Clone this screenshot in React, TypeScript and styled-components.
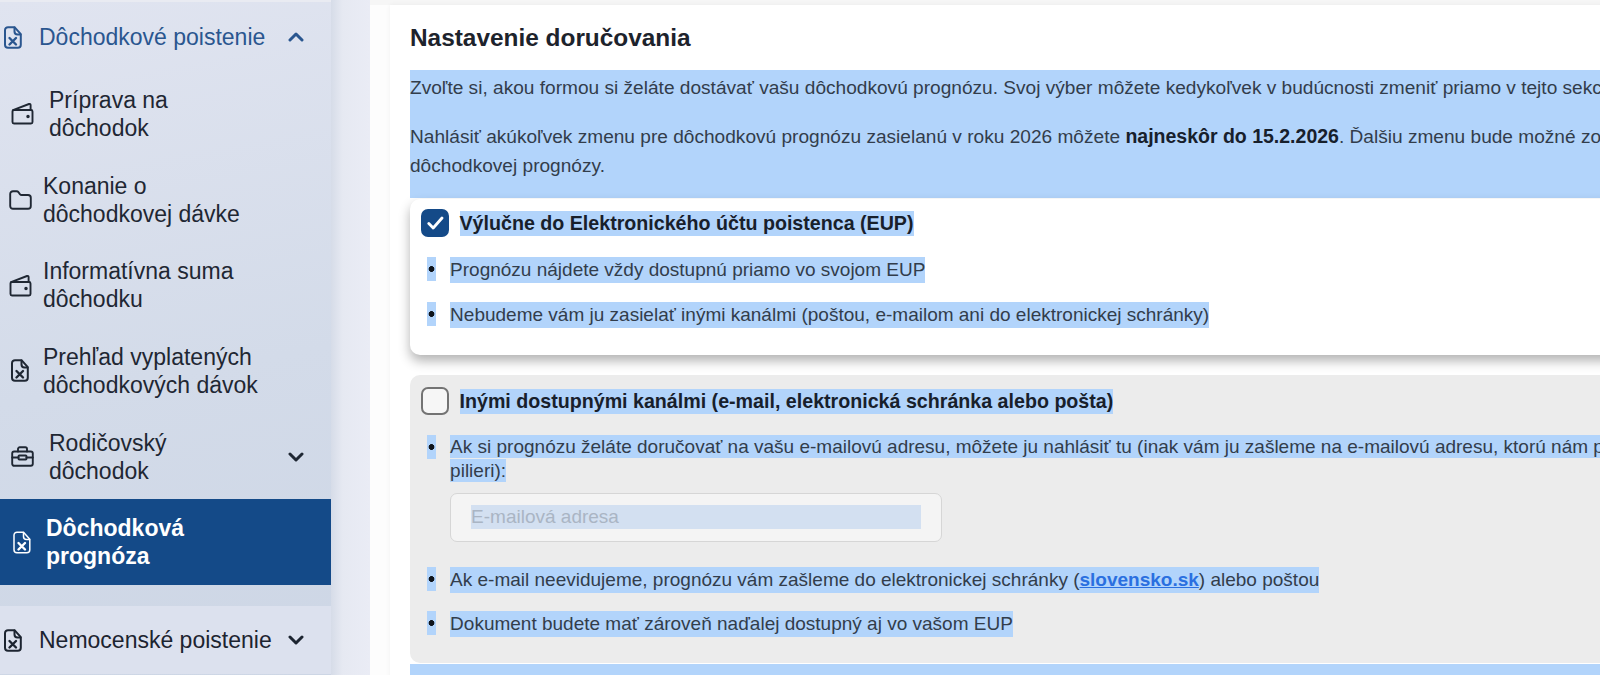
import React from 'react'
import styled, { createGlobalStyle } from 'styled-components'

const GlobalStyle = createGlobalStyle`
  html, body {
    margin: 0;
    height: 675px;
    overflow: hidden;
    background: #fdfdfd;
  }
  * {
    box-sizing: border-box;
  }
`

const Page = styled.div`
  display: flex;
  width: 1600px;
  height: 675px;
  overflow: hidden;
  font-family: 'Liberation Sans', Arial, sans-serif;
`

const Sidebar = styled.aside`
  flex: 0 0 331px;
  padding-top: 1px;
  background: linear-gradient(170deg, #e0e4f0 0%, #d3dbe9 55%, #cdd6e5 100%);
  border-top: 2px solid #e9ebf2;
`

const Gutter = styled.div`
  flex: 0 0 39px;
  background: linear-gradient(90deg, #d6dce8 0%, #e6e9f2 30%, #eaecf5 100%);
`

const Main = styled.main`
  flex: 1;
  min-width: 0;
  padding: 5px 0 0 20px;
  background: linear-gradient(180deg, #f6f6f6 0 5px, #fdfdfd 5px);
  overflow: hidden;
`

const GroupRow = styled.div<{ $open?: boolean; $spaced?: boolean }>`
  display: flex;
  align-items: center;
  height: 68px;
  padding: 0 27px 0 4px;
  margin-top: ${({ $spaced }) => ($spaced ? '21px' : '0')};
  background: ${({ $spaced }) => ($spaced ? '#dce1ee' : 'transparent')};
  color: ${({ $open }) => ($open ? '#2a568f' : '#1c2430')};
  font-size: 23px;
`

const GroupLabel = styled.span`
  flex: 1;
  margin-left: 17px;
  white-space: nowrap;
`

const NavItem = styled.div<{ $inset: number; $active?: boolean }>`
  display: flex;
  align-items: center;
  height: 85.7px;
  padding: 0 27px 0 ${({ $inset }) => $inset}px;
  background: ${({ $active }) => ($active ? '#144a88' : 'transparent')};
  color: ${({ $active }) => ($active ? '#ffffff' : '#1f2733')};
  font-size: 23px;
  font-weight: ${({ $active }) => ($active ? 700 : 400)};
  line-height: 28px;
`

const NavLabel = styled.span<{ $gap: number }>`
  flex: 1;
  margin-left: ${({ $gap }) => $gap}px;
`

const IconSvg = styled.svg<{ $w: number; $h: number; $stroke?: number }>`
  flex: none;
  width: ${({ $w }) => $w}px;
  height: ${({ $h }) => $h}px;
  fill: none;
  stroke: currentColor;
  stroke-width: ${({ $stroke = 2 }) => $stroke};
  stroke-linecap: round;
  stroke-linejoin: round;
`

const Card = styled.section`
  width: 1300px;
  height: 680px;
  padding-left: 20px;
  background: #ffffff;
  box-shadow: 0 0 5px rgba(0, 0, 0, 0.05);
`

const Title = styled.h2`
  display: flex;
  align-items: center;
  height: 65px;
  margin: 0;
  color: #1d232c;
  font-size: 24.4px;
  font-weight: 700;
`

const Intro = styled.div`
  height: 128px;
  padding-top: 2.5px;
  background: #b2d4fb;
  color: #323d4b;
  font-size: 19.1px;
  line-height: 29px;
  white-space: nowrap;
`

const IntroPara = styled.p`
  margin: 0 0 20px;

  b {
    color: #17202c;
    font-size: 19.5px;
  }
`

const Option = styled.div<{ $checked?: boolean }>`
  height: ${({ $checked }) => ($checked ? '156px' : '288px')};
  margin-top: ${({ $checked }) => ($checked ? '1px' : '20px')};
  padding: ${({ $checked }) => ($checked ? '10px' : '12px')} 0 0 11px;
  border-radius: 10px;
  background: ${({ $checked }) => ($checked ? '#ffffff' : '#ececec')};
  box-shadow: ${({ $checked }) => ($checked ? '0 6px 12px rgba(0, 0, 0, 0.3)' : 'none')};
`

const OptionHead = styled.div`
  display: flex;
  align-items: center;
  gap: 10.5px;
  height: 28px;
  margin-bottom: 20px;
  color: #18202b;
  font-size: 19.65px;
  font-weight: 700;
`

const Check = styled.span<{ $checked?: boolean }>`
  display: flex;
  align-items: center;
  justify-content: center;
  flex: none;
  width: 28px;
  height: 28px;
  border-radius: 7px;
  border: 2px solid ${({ $checked }) => ($checked ? '#144a88' : '#737373')};
  background: ${({ $checked }) => ($checked ? '#144a88' : '#f6f6f6')};
  color: #ffffff;
`

const Hl = styled.span`
  padding: 1px 0;
  background: #b2d4fb;
`

const BulletList = styled.ul`
  margin: 0;
  padding: 0 0 0 5.5px;
  list-style: none;
  color: #323d4b;
  font-size: 19px;
  line-height: 24px;
`

const Bullet = styled.li<{ $after?: number }>`
  display: flex;
  margin-bottom: ${({ $after = 19 }) => $after}px;
  white-space: nowrap;
`

const Marker = styled.span`
  flex: none;
  width: 9.6px;
  height: 24px;
  margin-right: 14px;
  background: radial-gradient(circle, #10151c 0 2.6px, transparent 3.2px), #b2d4fb;
`

const EmailBox = styled.div`
  display: flex;
  align-items: center;
  width: 492px;
  height: 49px;
  margin-top: 9.5px;
  padding: 0 20px;
  border: 1px solid #d6d6d6;
  border-radius: 7px;
  background: #f4f4f4;
  color: #aab5c4;
  font-size: 19px;
`

const EmailFill = styled.span`
  flex: 1;
  height: 24px;
  line-height: 24px;
  background: #d3e0f1;
`

const Link = styled.a`
  color: #2a6fe0;
  font-weight: 700;
  text-decoration: underline;
`

const BottomBand = styled.div`
  height: 60px;
  margin-top: 1px;
  background: #b2d4fb;
`

const FileX = ({ stroke }: { stroke?: number }) => (
  <IconSvg $w={18} $h={23} $stroke={stroke} viewBox="0 0 18 23">
    <path d="M4 1.2h6.5l6.3 7v10.6a3 3 0 0 1-3 3H4a3 3 0 0 1-3-3V4.2a3 3 0 0 1 3-3z" />
    <path d="M10.5 1.5v4a3 3 0 0 0 3 3h3" />
    <path d="M5.5 12l6.5 6.5M12 12l-6.5 6.5" strokeWidth="2.4" />
  </IconSvg>
)

const WalletIcon = () => (
  <IconSvg $w={23} $h={23} $stroke={1.9} viewBox="0 0 23 23">
    <path d="M1.5 9.5V20a1.5 1.5 0 0 0 1.5 1.5h17a1.5 1.5 0 0 0 1.5-1.5V9.5A1.5 1.5 0 0 0 20 8H3a1.5 1.5 0 0 0-1.5 1.5z" />
    <path d="M2 8.2L18 2c.9-.3 1.6.2 1.6 1.1V8" />
    <circle cx="17" cy="14.5" r="0.8" fill="currentColor" />
  </IconSvg>
)

const FolderIcon = () => (
  <IconSvg $w={23} $h={20} $stroke={1.9} viewBox="0 0 23 20">
    <path d="M1.2 4A2.8 2.8 0 0 1 4 1.2h3.6c.8 0 1.4.4 1.9 1l1.4 1.9c.4.5 1 .9 1.8.9H19a2.8 2.8 0 0 1 2.8 2.8V16a2.8 2.8 0 0 1-2.8 2.8H4A2.8 2.8 0 0 1 1.2 16z" />
  </IconSvg>
)

const CaseIcon = () => (
  <IconSvg $w={23} $h={21} $stroke={1.9} viewBox="0 0 23 21">
    <rect x="1.2" y="5.5" width="20.6" height="14.3" rx="2" />
    <path d="M7 5.5V3a1.7 1.7 0 0 1 1.7-1.7h5.6A1.7 1.7 0 0 1 16 3v2.5" />
    <path d="M1.2 11.5h6.3M15.5 11.5h6.3" />
    <rect x="7.5" y="9.5" width="8" height="4" rx="0.8" />
  </IconSvg>
)

const Chevron = ({ up }: { up?: boolean }) => (
  <IconSvg $w={16} $h={10} $stroke={3} viewBox="0 0 16 10">
    <path d={up ? 'M2 8l6-6 6 6' : 'M2 2l6 6 6-6'} />
  </IconSvg>
)

const CheckMark = () => (
  <IconSvg $w={17} $h={14} $stroke={2.8} viewBox="0 0 17 14">
    <path d="M1.8 7.5l4.4 4.5L15 2" />
  </IconSvg>
)

const App: React.FC = () => (
  <>
    <GlobalStyle />
    <Page>
      <Sidebar>
        <GroupRow $open>
          <FileX />
          <GroupLabel>Dôchodkové poistenie</GroupLabel>
          <Chevron up />
        </GroupRow>
        <NavItem $inset={11}>
          <WalletIcon />
          <NavLabel $gap={15}>
            Príprava na
            <br />
            dôchodok
          </NavLabel>
        </NavItem>
        <NavItem $inset={8.5}>
          <FolderIcon />
          <NavLabel $gap={11.5}>
            Konanie o
            <br />
            dôchodkovej dávke
          </NavLabel>
        </NavItem>
        <NavItem $inset={8.5}>
          <WalletIcon />
          <NavLabel $gap={11.5}>
            Informatívna suma
            <br />
            dôchodku
          </NavLabel>
        </NavItem>
        <NavItem $inset={11}>
          <FileX />
          <NavLabel $gap={14}>
            Prehľad vyplatených
            <br />
            dôchodkových dávok
          </NavLabel>
        </NavItem>
        <NavItem $inset={11}>
          <CaseIcon />
          <NavLabel $gap={15}>
            Rodičovský
            <br />
            dôchodok
          </NavLabel>
          <Chevron />
        </NavItem>
        <NavItem $inset={12.5} $active>
          <FileX stroke={1.5} />
          <NavLabel $gap={15.5}>
            Dôchodková
            <br />
            prognóza
          </NavLabel>
        </NavItem>
        <GroupRow $spaced>
          <FileX />
          <GroupLabel>Nemocenské poistenie</GroupLabel>
          <Chevron />
        </GroupRow>
      </Sidebar>
      <Gutter />
      <Main>
        <Card>
          <Title>Nastavenie doručovania</Title>
          <Intro>
            <IntroPara>
              Zvoľte si, akou formou si želáte dostávať vašu dôchodkovú prognózu. Svoj výber môžete kedykoľvek v
              budúcnosti zmeniť priamo v tejto sekcii.
            </IntroPara>
            <IntroPara>
              Nahlásiť akúkoľvek zmenu pre dôchodkovú prognózu zasielanú v roku 2026 môžete{' '}
              <b>najneskôr do 15.2.2026</b>. Ďalšiu zmenu bude možné zohľadniť
              <br />
              dôchodkovej prognózy.
            </IntroPara>
          </Intro>
          <Option $checked>
            <OptionHead>
              <Check $checked>
                <CheckMark />
              </Check>
              <Hl>Výlučne do Elektronického účtu poistenca (EUP)</Hl>
            </OptionHead>
            <BulletList>
              <Bullet>
                <Marker />
                <Hl>Prognózu nájdete vždy dostupnú priamo vo svojom EUP</Hl>
              </Bullet>
              <Bullet>
                <Marker />
                <Hl>Nebudeme vám ju zasielať inými kanálmi (poštou, e-mailom ani do elektronickej schránky)</Hl>
              </Bullet>
            </BulletList>
          </Option>
          <Option>
            <OptionHead>
              <Check />
              <Hl>Inými dostupnými kanálmi (e-mail, elektronická schránka alebo pošta)</Hl>
            </OptionHead>
            <BulletList>
              <Bullet $after={25}>
                <Marker />
                <div>
                  <Hl>
                    Ak si prognózu želáte doručovať na vašu e-mailovú adresu, môžete ju nahlásiť tu (inak vám ju zašleme
                    na e-mailovú adresu, ktorú nám poskytli
                  </Hl>
                  <br />
                  <Hl>pilieri):</Hl>
                  <EmailBox>
                    <EmailFill>E-mailová adresa</EmailFill>
                  </EmailBox>
                </div>
              </Bullet>
              <Bullet $after={18}>
                <Marker />
                <Hl>
                  Ak e-mail neevidujeme, prognózu vám zašleme do elektronickej schránky (<Link>slovensko.sk</Link>) alebo
                  poštou
                </Hl>
              </Bullet>
              <Bullet>
                <Marker />
                <Hl>Dokument budete mať zároveň naďalej dostupný aj vo vašom EUP</Hl>
              </Bullet>
            </BulletList>
          </Option>
          <BottomBand />
        </Card>
      </Main>
    </Page>
  </>
)

export default App
